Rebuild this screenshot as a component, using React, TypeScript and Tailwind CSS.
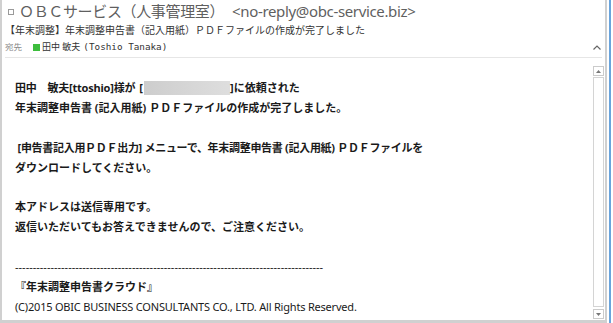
import { useState } from "react";

const jp = "font-['Noto_Sans','Noto_Sans_CJK_JP',sans-serif]";

const ScrollBar = () => (
  <div className="w-[11px] mt-[8px] mb-[1px] flex flex-col">
    <div className="h-[10px] border border-[#cbcbcb] flex items-center justify-center">
      <svg width="5" height="3" viewBox="0 0 5 3">
        <path d="M0 3 L2.5 0 L5 3 Z" fill="#777" />
      </svg>
    </div>
    <div className="flex-1 mt-[1px] mb-[2px] border border-[#d4d4d4]"></div>
    <div className="h-[10px] border border-[#cbcbcb] flex items-center justify-center">
      <svg width="5" height="3" viewBox="0 0 5 3">
        <path d="M0 0 L2.5 3 L5 0 Z" fill="#777" />
      </svg>
    </div>
  </div>
);

const Line = ({ children }: { children?: React.ReactNode }) => (
  <div className="h-[19.9px] leading-[19.9px] whitespace-pre">{children}</div>
);

export default function App() {
  const [open] = useState(true);

  return (
    <div className="w-[613px] h-[323px] bg-white flex overflow-hidden">
      {/* mail pane */}
      <div className="w-[607px] h-full flex flex-col border-l-2 border-r-2 border-b-[3px] border-[#d0d0d0]">
        {/* header */}
        <div className="px-[3px]">
          <div className={`h-[23px] flex items-center pl-[3px] text-[15px] text-[#5f5f5f] ${jp}`}>
            <span className="w-[6px] h-[6px] border border-[#9a9a9a] mr-[5px] mt-[1px]"></span>
            <span className="tracking-[-0.35px]">ＯＢＣサービス（人事管理室）</span>
            <span className="ml-[8px] tracking-[-0.35px]">&lt;no-reply@obc-service.biz&gt;</span>
          </div>
          <div className={`h-[14px] flex items-center text-[10px] text-[#333] ${jp}`}>
            【年末調整】年末調整申告書（記入用紙）ＰＤＦファイルの作成が完了しました
          </div>
          <div className="h-[18px] flex items-center pt-[2px]">
            <span className={`text-[8.5px] text-[#888] ${jp}`}>宛先</span>
            <span className="w-[7px] h-[7px] bg-[#3dbd3d] ml-[11px] mr-[2px]"></span>
            <span className={`text-[9px] text-[#333] ${jp}`}>田中 敏夫</span>
            <span className="text-[9.3px] text-[#333] ml-[3px] font-['DejaVu_Sans_Mono',monospace]">(Toshio Tanaka)</span>
            <span className="ml-auto mr-[1px]">
              <svg width="8" height="5" viewBox="0 0 8 5" className={open ? "" : "rotate-180"}>
                <path d="M0.5 4.5 L4 1 L7.5 4.5" stroke="#666" strokeWidth="1.2" fill="none" />
              </svg>
            </span>
          </div>
          <div className="h-[3px] border-b border-[#e6e6e6]"></div>
        </div>

        {/* body */}
        <div className="flex-1 flex min-h-0">
          <div className={`flex-1 pl-[13px] pt-[20px] text-[11px] text-[#1a1a1a] ${jp}`}>
            <Line>
              <span className="font-bold tracking-[-0.2px]">田中　敏夫[ttoshio]様が</span>
              <span className="font-bold ml-[4px]">[</span>
              <span className="inline-block align-middle w-[86px] h-[14px] ml-[1px] -mt-[2px] bg-gradient-to-r from-[#cdcdcd] to-[#dedede]"></span>
              <span className="font-bold">]に依頼された</span>
            </Line>
            <Line>
              <span className="font-bold">年末調整申告書 (記入用紙) ＰＤＦファイルの作成が完了しました。</span>
            </Line>
            <Line />
            <Line>
              <span className="font-bold tracking-[-0.3px]"> [申告書記入用ＰＤＦ出力] メニューで、年末調整申告書 (記入用紙) ＰＤＦファイルを</span>
            </Line>
            <Line>
              <span className="font-bold">ダウンロードしてください。</span>
            </Line>
            <Line />
            <Line>
              <span className="font-bold">本アドレスは送信専用です。</span>
            </Line>
            <Line>
              <span className="font-bold">返信いただいてもお答えできませんので、ご注意ください。</span>
            </Line>
            <Line />
            <Line>
              <span>---------------------------------------------------------------------------------------</span>
            </Line>
            <Line>
              <span className="font-bold">『年末調整申告書クラウド』</span>
            </Line>
            <Line>
              <span className="tracking-[-0.2px]">(C)2015 OBIC BUSINESS CONSULTANTS CO., LTD. All Rights Reserved.</span>
            </Line>
          </div>
          <ScrollBar />
          <div className="w-[1px]"></div>
        </div>
      </div>
      <div className="w-[2px]"></div>
      <div className="w-[2px] bg-[#6aa4dc]"></div>
      <div className="w-[2px]"></div>
    </div>
  );
}
